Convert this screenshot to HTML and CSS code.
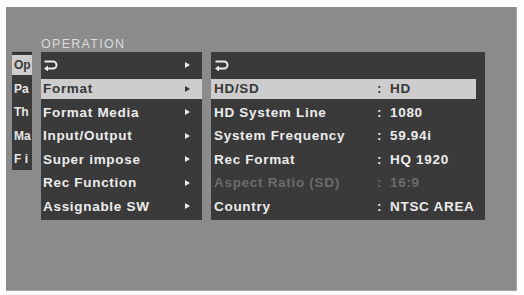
FILE: index.html
```html
<!DOCTYPE html>
<html lang="en">
<head>
    <meta charset="UTF-8">
    <title>OPERATION</title>
    <link rel="stylesheet" href="styles.css">
</head>
<body>
    <div class="screen">
        <div class="menus">
            <div class="title">OPERATION</div>

            <div class="prev">
                <div class="prev-item on">Op</div>
                <div class="prev-item">Pa</div>
                <div class="prev-item">Th</div>
                <div class="prev-item">Ma</div>
                <div class="prev-item">F i</div>
            </div>

            <div class="menu main">
                <div class="item">
                    <svg class="back" viewBox="0 0 16 11" width="16" height="11"><path d="M1.5 1.5 H10 A3.5 3.5 0 0 1 10 8.5 H4"/><polygon points="1,8.5 5,5.5 5,11.5"/></svg>
                    <span class="arrow"></span>
                </div>
                <div class="item on">Format<span class="arrow"></span></div>
                <div class="item">Format Media<span class="arrow"></span></div>
                <div class="item">Input/Output<span class="arrow"></span></div>
                <div class="item">Super impose<span class="arrow"></span></div>
                <div class="item">Rec Function<span class="arrow"></span></div>
                <div class="item">Assignable SW<span class="arrow"></span></div>
            </div>

            <div class="menu sub">
                <div class="row">
                    <svg class="back" viewBox="0 0 16 11" width="16" height="11"><path d="M1.5 1.5 H10 A3.5 3.5 0 0 1 10 8.5 H4"/><polygon points="1,8.5 5,5.5 5,11.5"/></svg>
                </div>
                <div class="row on"><span>HD/SD</span><span>:</span><span>HD</span></div>
                <div class="row"><span>HD System Line</span><span>:</span><span>1080</span></div>
                <div class="row"><span>System Frequency</span><span>:</span><span>59.94i</span></div>
                <div class="row"><span>Rec Format</span><span>:</span><span>HQ 1920</span></div>
                <div class="row off"><span>Aspect Ratio (SD)</span><span>:</span><span>16:9</span></div>
                <div class="row"><span>Country</span><span>:</span><span>NTSC AREA</span></div>
            </div>
        </div>
    </div>
</body>
</html>
```

FILE: styles.css
```css
body {
    margin: 0;
    background-color: #fdfdfd;
    font-family: "Liberation Sans", Arial, sans-serif;
}
.screen {
    margin: 7px 0 0 6px;
    width: 511px;
    height: 284px;
    background-color: #8b8b8b;
    border-right: 1px solid #a9a9a9;
    border-bottom: 1px solid #a9a9a9;
    padding: 29px 0 0 6px;
    box-sizing: border-box;
}
.menus {
    display: grid;
    grid-template-columns: 20px 161px 274px;
    column-gap: 9px;
    align-items: start;
}
.title {
    grid-column: 2;
    height: 16px;
    line-height: 16px;
    font-size: 12.5px;
    letter-spacing: 1.3px;
    color: #dadada;
}
.prev {
    grid-column: 1;
    grid-row: 2;
    background-color: #3a3a3a;
    border-top: 1px solid #2a2a2a;
    padding: 2px 0 1px;
    display: flex;
    flex-direction: column;
    gap: 3.5px;
}
.prev-item {
    height: 20px;
    line-height: 20px;
    padding-left: 2px;
    font-size: 12px;
    font-weight: bold;
    color: #e6e6e6;
    overflow: hidden;
    white-space: nowrap;
}
.prev-item.on {
    background-color: #cdcdcd;
    color: #3a3a3a;
}
.menu {
    grid-row: 2;
    background-color: #3a3a3a;
    padding: 3px 0 4px;
    display: flex;
    flex-direction: column;
    gap: 3.5px;
}
.item, .row {
    height: 20px;
    font-size: 13.5px;
    font-weight: bold;
    letter-spacing: 0.7px;
    color: #ececec;
    white-space: nowrap;
}
.item {
    display: flex;
    align-items: center;
    justify-content: space-between;
    padding: 0 12px 0 2px;
}
.sub {
    padding-right: 9px;
}
.row {
    display: grid;
    grid-template-columns: 163px 13px 1fr;
    align-items: center;
    padding-left: 3px;
}
.item.on, .row.on {
    background-color: #cdcdcd;
    color: #383838;
}
.row.off {
    color: #6c6c6c;
}
.arrow {
    width: 0;
    height: 0;
    border-left: 5px solid #ececec;
    border-top: 3.5px solid transparent;
    border-bottom: 3.5px solid transparent;
}
.item.on .arrow {
    border-left-color: #383838;
}
.back {
    display: block;
}
.back path {
    fill: none;
    stroke: #ececec;
    stroke-width: 2;
}
.back polygon {
    fill: #ececec;
}
```
